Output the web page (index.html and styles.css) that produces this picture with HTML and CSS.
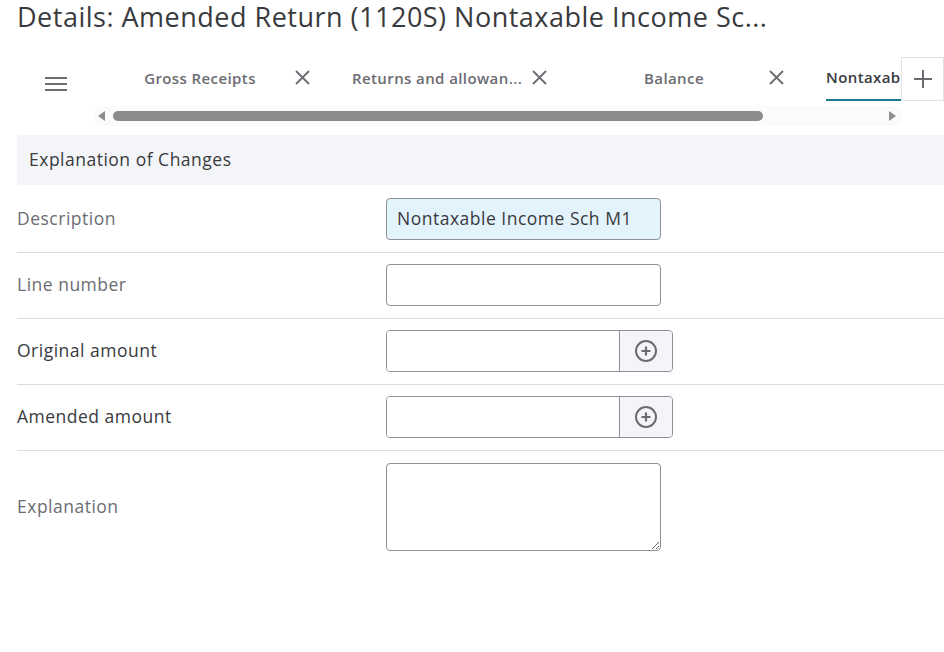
FILE: index.html
```html
<!DOCTYPE html>
<html>
<head>
<meta charset="utf-8">
<link rel="stylesheet" href="styles.css">
</head>
<body>
<h1 class="title">Details: Amended Return (1120S) Nontaxable Income Sc...</h1>

<div class="header">
  <div class="tabrow">
    <div class="menu">
      <svg width="22" height="16" viewBox="0 0 22 16"><path d="M0 2h22M0 8h22M0 14h22" stroke="#6b6c72" stroke-width="2"/></svg>
    </div>
    <div class="tabs">
      <div class="tab"><span class="tab-label">Gross Receipts</span><span class="tab-close"><svg width="15" height="15" viewBox="0 0 15 15"><path d="M1 1L14 14M14 1L1 14" stroke="#6b6c72" stroke-width="1.8"/></svg></span></div>
      <div class="tab"><span class="tab-label">Returns and allowan...</span><span class="tab-close"><svg width="15" height="15" viewBox="0 0 15 15"><path d="M1 1L14 14M14 1L1 14" stroke="#6b6c72" stroke-width="1.8"/></svg></span></div>
      <div class="tab"><span class="tab-label">Balance</span><span class="tab-close"><svg width="15" height="15" viewBox="0 0 15 15"><path d="M1 1L14 14M14 1L1 14" stroke="#6b6c72" stroke-width="1.8"/></svg></span></div>
      <div class="tab tab-active"><span class="tab-label">Nontaxable Income Sch M1</span></div>
    </div>
    <div class="add">
      <svg width="20" height="20" viewBox="0 0 20 20"><path d="M10 1v18M1 10h18" stroke="#6b6c72" stroke-width="2"/></svg>
    </div>
  </div>
  <div class="scrollrow">
    <span class="arrow arrow-left"></span>
    <div class="track"><div class="thumb"></div></div>
    <span class="arrow arrow-right"></span>
  </div>
</div>

<div class="content">
  <div class="section-head">Explanation of Changes</div>

  <div class="row row-first">
    <div class="label muted">Description</div>
    <div class="field"><div class="input filled">Nontaxable Income Sch M1</div></div>
  </div>
  <div class="row">
    <div class="label muted">Line number</div>
    <div class="field"><div class="input"></div></div>
  </div>
  <div class="row">
    <div class="label">Original amount</div>
    <div class="field">
      <div class="amount">
        <div class="amount-input"></div>
        <div class="amount-btn"><svg width="24" height="24" viewBox="0 0 24 24"><circle cx="12" cy="12" r="10" fill="none" stroke="#6b6c72" stroke-width="2"/><path d="M12 7.5v9M7.5 12h9" stroke="#6b6c72" stroke-width="2.2"/></svg></div>
      </div>
    </div>
  </div>
  <div class="row">
    <div class="label">Amended amount</div>
    <div class="field">
      <div class="amount">
        <div class="amount-input"></div>
        <div class="amount-btn"><svg width="24" height="24" viewBox="0 0 24 24"><circle cx="12" cy="12" r="10" fill="none" stroke="#6b6c72" stroke-width="2"/><path d="M12 7.5v9M7.5 12h9" stroke="#6b6c72" stroke-width="2.2"/></svg></div>
      </div>
    </div>
  </div>
  <div class="row row-last">
    <div class="label muted">Explanation</div>
    <div class="field"><textarea class="textarea"></textarea></div>
  </div>
</div>
</body>
</html>
```

FILE: styles.css
```css
* { box-sizing: border-box; }

body {
  margin: 0;
  font-family: "Open Sans", "Noto Sans", sans-serif;
  color: #393a3d;
  background: #fff;
  width: 944px;
  overflow: hidden;
}

.title {
  margin: 0;
  padding: 0 0 0 17px;
  height: 57px;
  font-size: 27px;
  font-weight: 400;
  letter-spacing: 0.5px;
  line-height: 34px;
  color: #393a3d;
  white-space: nowrap;
}

.tabrow {
  display: flex;
  height: 44px;
}

.menu {
  width: 115px;
  flex-shrink: 0;
  display: flex;
  align-items: center;
  padding-left: 45px;
  padding-top: 10px;
}

.tabs {
  flex: 1;
  display: flex;
  overflow: hidden;
  min-width: 0;
}

.tab {
  flex-shrink: 0;
  width: 237px;
  display: flex;
  align-items: center;
  font-size: 15px;
  letter-spacing: 0.4px;
  font-weight: 600;
  color: #6b6c72;
  padding-bottom: 3px;
}

.tab-label {
  width: 170px;
  text-align: center;
  white-space: nowrap;
  overflow: hidden;
}

.tab-close {
  margin-left: 10px;
  width: 15px;
  height: 15px;
  display: flex;
}

.tab-active {
  padding-bottom: 0;
}

.tab-active .tab-label {
  width: auto;
  text-align: left;
  color: #393a3d;
  align-self: stretch;
  display: flex;
  align-items: center;
  border-bottom: 2px solid #1d7a8c;
  padding-bottom: 2px;
}

.add {
  width: 43px;
  flex-shrink: 0;
  border: 1px solid #e3e3e3;
  display: flex;
  align-items: center;
  justify-content: center;
  background: #fff;
}

.scrollrow {
  display: flex;
  align-items: center;
  height: 20px;
  margin-left: 95px;
  width: 806px;
  background: #fbfbfb;
  margin-top: 5px;
}

.arrow {
  width: 0;
  height: 0;
  border-top: 5px solid transparent;
  border-bottom: 5px solid transparent;
}

.arrow-left {
  margin-left: 3px;
  border-right: 7px solid #8d8d8d;
}

.arrow-right {
  margin-right: 5px;
  border-left: 7px solid #8d8d8d;
}

.track {
  flex: 1;
  height: 10px;
  margin: 0 0 0 8px;
}

.thumb {
  width: 650px;
  height: 10px;
  border-radius: 5px;
  background: #8c8c8c;
}

.content {
  padding-left: 17px;
  margin-top: 9px;
}

.section-head {
  height: 50px;
  background: #f4f5f8;
  display: flex;
  align-items: center;
  padding-left: 12px;
  padding-bottom: 2px;
  font-size: 17.5px;
  letter-spacing: 0.5px;
  color: #393a3d;
}

.row {
  display: flex;
  align-items: center;
  padding: 11px 0 12px;
  border-bottom: 1px solid #dcdcdc;
}

.row-first {
  padding: 13px 0 12px;
}

.row-last {
  padding-top: 12px;
  border-bottom: none;
}

.label {
  width: 369px;
  flex-shrink: 0;
  font-size: 17.5px;
  letter-spacing: 0.5px;
  color: #393a3d;
  padding-bottom: 3px;
}

.label.muted {
  color: #6b6c72;
}

.input {
  width: 275px;
  height: 42px;
  border: 1px solid #8d9096;
  border-radius: 4px;
  background: #fff;
  font-size: 17.5px;
  letter-spacing: 0.5px;
  color: #393a3d;
  display: flex;
  align-items: center;
  padding-left: 10px;
  padding-bottom: 2px;
}

.input.filled {
  background: #e3f3fb;
}

.amount {
  width: 287px;
  height: 42px;
  border: 1px solid #8d9096;
  border-radius: 4px;
  display: flex;
  overflow: hidden;
}

.amount-input {
  flex: 1;
  background: #fff;
}

.amount-btn {
  width: 53px;
  border-left: 1px solid #8d9096;
  background: #f4f5f8;
  display: flex;
  align-items: center;
  justify-content: center;
}

.textarea {
  display: block;
  width: 275px;
  height: 88px;
  border: 1px solid #8d9096;
  border-radius: 4px;
  margin: 0;
  font-family: inherit;
  font-size: 17px;
}
```
